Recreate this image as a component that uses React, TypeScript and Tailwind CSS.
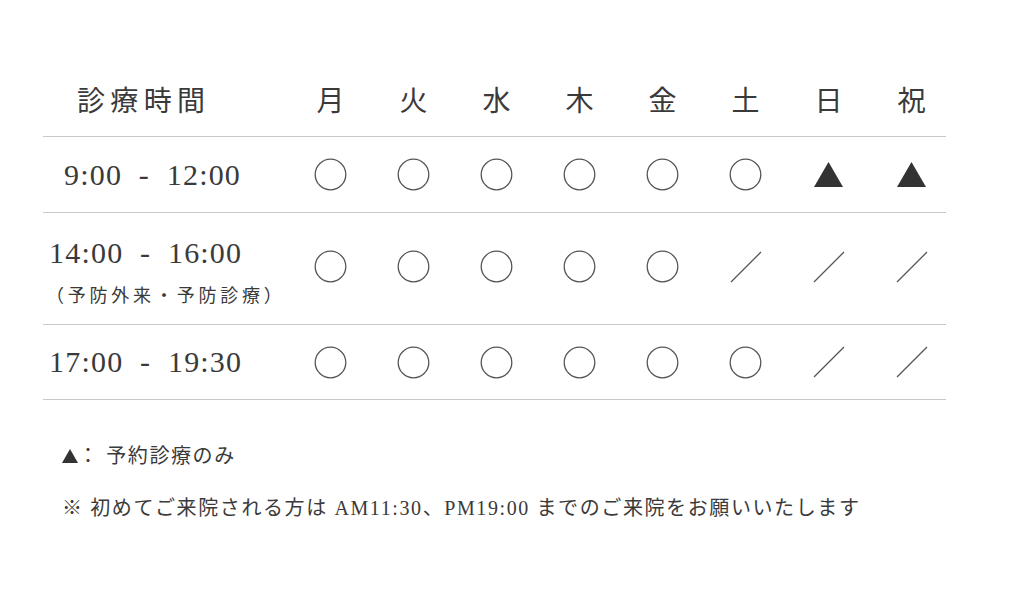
import React from "react"

const days = ["月", "火", "水", "木", "金", "土", "日", "祝"]

type Mark = "o" | "t" | "x"

const rows: { time: string; note?: string; marks: Mark[]; h: string; pad: string }[] = [
  { time: "9:00 - 12:00", marks: ["o", "o", "o", "o", "o", "o", "t", "t"], h: "h-[76px]", pad: "pl-[21px]" },
  { time: "14:00 - 16:00", note: "（予防外来・予防診療）", marks: ["o", "o", "o", "o", "o", "x", "x", "x"], h: "h-[112px]", pad: "pl-[6px]" },
  { time: "17:00 - 19:30", marks: ["o", "o", "o", "o", "o", "o", "x", "x"], h: "h-[75px]", pad: "pl-[6px]" },
]

const font = "font-['Liberation_Serif','Noto_Sans_CJK_JP',serif]"

function Circle() {
  return (
    <svg width="33" height="33" viewBox="0 0 33 33">
      <circle cx="16.5" cy="16.5" r="15.3" fill="none" stroke="#555" strokeWidth="1.3" />
    </svg>
  )
}

function Triangle({ w = 29, h = 25 }: { w?: number; h?: number }) {
  return (
    <svg width={w} height={h} viewBox="0 0 29 25">
      <polygon points="14.5,0 29,25 0,25" fill="#333" />
    </svg>
  )
}

function Slash() {
  return (
    <svg width="32" height="32" viewBox="0 0 32 32">
      <line x1="1" y1="31" x2="31" y2="1" stroke="#555" strokeWidth="1.3" />
    </svg>
  )
}

function MarkCell({ mark }: { mark: Mark }) {
  return (
    <div className="flex w-[83px] shrink-0 items-center justify-center">
      {mark === "o" && <Circle />}
      {mark === "t" && <Triangle />}
      {mark === "x" && <Slash />}
    </div>
  )
}

export default function App() {
  return (
    <div className={`h-[608px] w-[1024px] bg-white pl-[43px] pt-[64px] text-[#3a3a3a] ${font}`}>
      <div className="w-[903px]">
        {/* header */}
        <div className="flex h-[73px] items-center border-b border-[#c8c8c8] pt-[4px]">
          <div className="w-[246px] shrink-0 pl-[34px] text-[28px] tracking-[0.19em]">診療時間</div>
          {days.map((d) => (
            <div key={d} className="w-[83px] shrink-0 text-center text-[28px]">
              {d}
            </div>
          ))}
        </div>

        {rows.map((r) => (
          <div key={r.time} className={`flex ${r.h} border-b border-[#c8c8c8]`}>
            {r.note ? (
              <div className={`w-[246px] shrink-0 ${r.pad} pt-[22px]`}>
                <div className="text-[30px] leading-[36px] tracking-[0.04em] [word-spacing:8px]">{r.time}</div>
                <div className="mt-[13px] -ml-[3px] text-[18px] leading-[24px] tracking-[0.21em]">{r.note}</div>
              </div>
            ) : (
              <div className={`flex w-[246px] shrink-0 items-center ${r.pad}`}>
                <span className="text-[30px] leading-[36px] tracking-[0.04em] [word-spacing:8px]">{r.time}</span>
              </div>
            )}
            <div className={`flex ${r.note ? "pb-[4px]" : ""}`}>
              {r.marks.map((m, i) => (
                <MarkCell key={i} mark={m} />
              ))}
            </div>
          </div>
        ))}
      </div>

      <div className="mt-[42px] pl-[19px] text-[20px] leading-[28px] tracking-[0.08em]">
        <div className="flex items-center">
          <Triangle w={16} h={14} />
          <span>： 予約診療のみ</span>
        </div>
        <div className="mt-[24px]">
          ※ 初めてご来院される方は AM11:30、PM19:00 までのご来院をお願いいたします
        </div>
      </div>
    </div>
  )
}
